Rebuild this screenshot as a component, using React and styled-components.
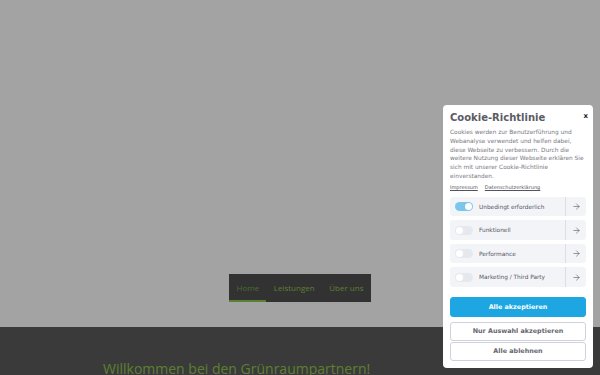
import React from 'react'
import styled, { createGlobalStyle } from 'styled-components'
import { ArrowRight } from 'lucide-react'

const Global = createGlobalStyle`
  html, body {
    margin: 0;
    padding: 0;
    height: 100%;
    overflow: hidden;
  }
  body {
    font-family: "Open Sans", "DejaVu Sans", sans-serif;
  }
`

const Page = styled.div`
  width: 600px;
  height: 375px;
  overflow: hidden;
  display: flex;
  flex-direction: column;
`

const Hero = styled.header`
  height: 327px;
  flex-shrink: 0;
  background: #ffffff;
  display: flex;
  flex-direction: column;
  justify-content: flex-end;
  align-items: center;
  padding-bottom: 25px;
  box-sizing: border-box;
`

const Nav = styled.nav`
  display: flex;
  height: 28px;
  background: #4f4f4f;
`

const NavItem = styled.a`
  display: flex;
  align-items: center;
  padding: 0 7.3px;
  font-size: 8px;
  color: ${p => (p.$active ? '#78a845' : '#92c250')};
  border-bottom: 2px solid ${p => (p.$active ? '#8cc850' : 'transparent')};
  box-sizing: border-box;
  text-decoration: none;
`

const Band = styled.section`
  flex: 1;
  background: #5c5c5c;
  padding: 32px 0 0 103px;
`

const Heading = styled.h1`
  margin: 0;
  font-weight: 400;
  font-size: 14px;
  line-height: 20px;
  color: #91c64e;
  white-space: nowrap;
`

const Overlay = styled.div`
  position: fixed;
  inset: 0;
  background: rgba(0, 0, 0, 0.36);
`

const Modal = styled.div`
  position: fixed;
  top: 105px;
  left: 443px;
  width: 150px;
  box-sizing: border-box;
  background: #ffffff;
  border-radius: 4px;
  padding: 6px 7px 7px;
  font-family: "DejaVu Sans", Verdana, sans-serif;
  display: flex;
  flex-direction: column;
`

const Title = styled.h2`
  margin: 0;
  font-size: 10px;
  font-weight: 700;
  line-height: 13px;
  color: #5b5b66;
`

const Close = styled.button`
  position: absolute;
  top: 7px;
  right: 5px;
  border: 0;
  background: none;
  padding: 0;
  font-family: "DejaVu Sans", sans-serif;
  font-weight: 700;
  font-size: 7px;
  line-height: 8px;
  color: #222;
`

const Text = styled.p`
  margin: 4px 0 0;
  font-size: 5.85px;
  line-height: 8.8px;
  color: #77777f;
`

const Links = styled.div`
  display: flex;
  gap: 7px;
  margin-top: 3px;
  font-size: 5px;
  line-height: 7px;
  & > a {
    color: #555560;
    text-decoration: underline;
  }
`

const Options = styled.div`
  display: flex;
  flex-direction: column;
  gap: 4px;
  margin-top: 6px;
`

const Row = styled.div`
  display: flex;
  align-items: center;
  height: 19.5px;
  background: #f3f4f8;
  border-radius: 3px;
`

const Toggle = styled.span`
  position: relative;
  width: 18px;
  height: 9px;
  margin: 0 6px 0 5px;
  border-radius: 5px;
  background: ${p => (p.$on ? '#7cc7e9' : '#e6e8ee')};
  &::after {
    content: '';
    position: absolute;
    top: 1px;
    left: ${p => (p.$on ? '10px' : '1px')};
    width: 7px;
    height: 7px;
    border-radius: 50%;
    background: #fff;
  }
`

const Label = styled.span`
  flex: 1;
  font-size: 5.8px;
  color: #55555f;
`

const More = styled.span`
  width: 20px;
  height: 100%;
  border-left: 1px solid #dcdee5;
  display: flex;
  align-items: center;
  justify-content: center;
  color: #555;
`

const Button = styled.button`
  height: ${p => (p.$primary ? 20 : 19)}px;
  border-radius: 3px;
  font-family: "DejaVu Sans", sans-serif;
  font-weight: 700;
  font-size: 6.4px;
  cursor: pointer;
  border: 1px solid ${p => (p.$primary ? '#1da6e2' : '#cfd2dc')};
  background: ${p => (p.$primary ? '#1da6e2' : '#ffffff')};
  color: ${p => (p.$primary ? '#ffffff' : '#66666e')};
  margin-top: ${p => p.$mt || 0}px;
`

const options = [
  { label: 'Unbedingt erforderlich', on: true },
  { label: 'Funktionell' },
  { label: 'Performance' },
  { label: 'Marketing / Third Party' },
]

export default function App() {
  return (
    <Page>
      <Global />
      <Hero>
        <Nav>
          <NavItem $active>Home</NavItem>
          <NavItem>Leistungen</NavItem>
          <NavItem>Über uns</NavItem>
        </Nav>
      </Hero>
      <Band>
        <Heading>Willkommen bei den Grünraumpartnern!</Heading>
      </Band>
      <Overlay />
      <Modal>
        <Close>x</Close>
        <Title>Cookie-Richtlinie</Title>
        <Text>
          Cookies werden zur Benutzerführung und Webanalyse verwendet und helfen dabei,
          diese Webseite zu verbessern. Durch die weitere Nutzung dieser Webseite erklären Sie
          sich mit unserer Cookie-Richtlinie einverstanden.
        </Text>
        <Links>
          <a>Impressum</a>
          <a>Datenschutzerklärung</a>
        </Links>
        <Options>
          {options.map(o => (
            <Row key={o.label}>
              <Toggle $on={o.on} />
              <Label>{o.label}</Label>
              <More>
                <ArrowRight size={9} strokeWidth={1.6} />
              </More>
            </Row>
          ))}
        </Options>
        <Button $primary $mt={10}>Alle akzeptieren</Button>
        <Button $mt={5}>Nur Auswahl akzeptieren</Button>
        <Button $mt={1}>Alle ablehnen</Button>
      </Modal>
    </Page>
  )
}
